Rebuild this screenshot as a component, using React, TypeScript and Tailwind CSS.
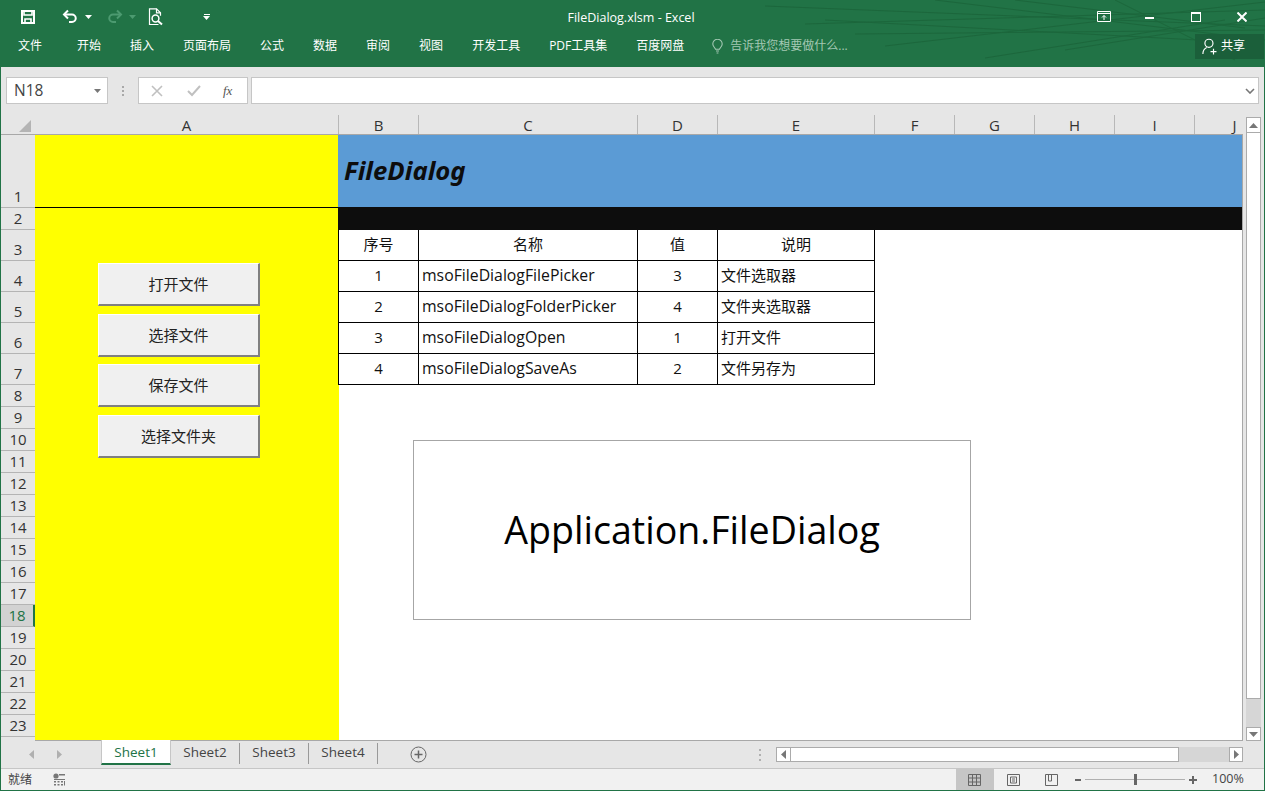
import React from "react";

const FONT = "font-['Open_Sans','Noto_Sans_CJK_SC',sans-serif]";

const tabs = ["开始", "插入", "页面布局", "公式", "数据", "审阅", "视图", "开发工具", "PDF工具集", "百度网盘"];

const columns = [
  { label: "A", w: "w-[304px]" },
  { label: "B", w: "w-[80px]" },
  { label: "C", w: "w-[219px]" },
  { label: "D", w: "w-[80px]" },
  { label: "E", w: "w-[157px]" },
  { label: "F", w: "w-[80px]" },
  { label: "G", w: "w-[80px]" },
  { label: "H", w: "w-[80px]" },
  { label: "I", w: "w-[80px]" },
  { label: "J", w: "w-[80px]" },
];

const rowHeights = [
  "h-[73px]", "h-[22px]", "h-[31px]", "h-[31px]", "h-[31px]", "h-[31px]", "h-[31px]",
  "h-[22px]", "h-[22px]", "h-[22px]", "h-[22px]", "h-[22px]", "h-[22px]", "h-[22px]", "h-[22px]",
  "h-[22px]", "h-[22px]", "h-[22px]", "h-[22px]", "h-[22px]", "h-[22px]", "h-[22px]", "h-[22px]", "h-[22px]",
];

const tableRows = [
  ["1", "msoFileDialogFilePicker", "3", "文件选取器"],
  ["2", "msoFileDialogFolderPicker", "4", "文件夹选取器"],
  ["3", "msoFileDialogOpen", "1", "打开文件"],
  ["4", "msoFileDialogSaveAs", "2", "文件另存为"],
];

function SaveIcon() {
  return (
    <svg width="16" height="16" viewBox="0 0 16 16" fill="none" stroke="#fff" strokeWidth="2">
      <path d="M2 2h12v12H2z" />
      <path d="M4 2v4h8V2" strokeWidth="1.6" />
      <path d="M5 14v-4h6v4" strokeWidth="1.6" />
    </svg>
  );
}

function UndoIcon({ color, flip }: { color: string; flip?: boolean }) {
  return (
    <svg width="16" height="15" viewBox="0 0 16 15" fill="none" stroke={color} strokeWidth="2" className={flip ? "-scale-x-100" : ""}>
      <path d="M6 1.500 2 5.500l4 4" />
      <path d="M2.500 5.500H10a3.600 3.600 0 0 1 0 7.500H7" />
    </svg>
  );
}

function Caret({ color }: { color: string }) {
  return (
    <svg width="7" height="4" viewBox="0 0 7 4" fill={color}>
      <path d="M0 0h7L3.500 4z" />
    </svg>
  );
}

function PreviewIcon() {
  return (
    <svg width="16" height="18" viewBox="0 0 16 18" fill="none" stroke="#fff" strokeWidth="1.2">
      <path d="M10.500 16.500H1.500V.8h7l4 4v3" />
      <path d="M8.500.8v4h4" />
      <circle cx="7.500" cy="10.500" r="3.400" strokeWidth="1.500" />
      <path d="m10 13 4 3.600" strokeWidth="2" />
    </svg>
  );
}

function TriButton({ dir, dim }: { dir: "up" | "down" | "left" | "right"; dim?: boolean }) {
  const c = dim ? "#b0b0b0" : "#777777";
  const d = { up: "M0 5h9L4.500 0z", down: "M0 0h9L4.500 5z", left: "M5 0v9L0 4.500z", right: "M0 0v9l5-4.500z" }[dir];
  const horizontal = dir === "up" || dir === "down";
  return (
    <svg width={horizontal ? 9 : 5} height={horizontal ? 5 : 9} viewBox={horizontal ? "0 0 9 5" : "0 0 5 9"} fill={c}>
      <path d={d} />
    </svg>
  );
}

function TitleBar() {
  return (
    <div className="relative h-[67px] shrink-0 overflow-hidden bg-[#217346] text-white">
      <svg className="absolute right-0 top-0" width="500" height="67" viewBox="0 0 500 67" fill="none" stroke="#1b6339" strokeWidth="1" opacity="0.75">
        <path d="M0 6 500 26" />
        <path d="M40 24 500 10" />
        <path d="M90 34 500 30" />
        <path d="M170 0 500 40" />
        <path d="M250 0 480 28" />
        <path d="M350 0 470 60" />
        <path d="M120 46 500 2" />
        <path d="M220 58 460 20" />
        <path d="M300 50 500 18" />
        <path d="M60 20 470 42" />
      </svg>
      <div className="absolute inset-x-0 top-[9px] pr-[3px] text-center text-[12.5px] leading-[17px]">FileDialog.xlsm - Excel</div>
      <div className="relative flex h-[33px] items-center">
        <div className="ml-[20px]"><SaveIcon /></div>
        <div className="ml-[26px]"><UndoIcon color="#ffffff" /></div>
        <div className="ml-[7px]"><Caret color="#ffffff" /></div>
        <div className="ml-[15px]"><UndoIcon color="#4c9a70" flip /></div>
        <div className="ml-[6px]"><Caret color="#4c9a70" /></div>
        <div className="ml-[12px]"><PreviewIcon /></div>
        <div className="ml-[39px] flex flex-col items-center gap-[1px]">
          <div className="h-[1px] w-[6px] bg-white" />
          <Caret color="#ffffff" />
        </div>
        <div className="ml-auto flex items-center">
          <div className="flex w-[46px] justify-center">
            <svg width="14" height="11" viewBox="0 0 14 11" fill="none" stroke="#fff" strokeWidth="1">
              <path d="M.5.5h13v10H.5z" />
              <path d="M.5 2.500h13" />
              <path d="M7 9V4.500M5 6.500l2-2 2 2" />
            </svg>
          </div>
          <div className="flex w-[46px] justify-center pr-[2px]">
            <div className="mt-[2px] h-[2px] w-[9px] bg-white" />
          </div>
          <div className="flex w-[46px] justify-center pr-[1px]">
            <div className="h-[10px] w-[10px] border border-t-2 border-white" />
          </div>
          <div className="flex w-[46px] justify-center">
            <svg width="10" height="10" viewBox="0 0 10 10" stroke="#fff" strokeWidth="2">
              <path d="m.5.5 9 9M9.500.5l-9 9" />
            </svg>
          </div>
        </div>
      </div>
      <div className="relative flex h-[26px] items-center pl-[18px] text-[12px]">
        <span className="mr-[35px]">文件</span>
        <div className="flex gap-[29px]">
          {tabs.map((t) => (
            <span key={t} className="whitespace-nowrap">{t}</span>
          ))}
        </div>
        <div className="ml-[28px] flex items-center gap-[7px] text-[#a3c8b3]">
          <svg width="11" height="15" viewBox="0 0 11 15" fill="none" stroke="#a3c8b3" strokeWidth="1.1">
            <path d="M3.500 10.200C3 8.600.8 7.600.8 5A4.700 4.700 0 0 1 10.200 5c0 2.600-2.200 3.600-2.700 5.200z" />
            <path d="M4 12h3M4.600 14h1.800" />
          </svg>
          <span className="whitespace-nowrap">告诉我您想要做什么...</span>
        </div>
        <div className="ml-auto mr-[1px] flex h-[25px] w-[69px] items-center gap-[3px] bg-[#1b5f3a] pl-[7px]">
          <svg width="16" height="17" viewBox="0 0 15 16" fill="none" stroke="#fff" strokeWidth="1.1">
            <circle cx="6.500" cy="5" r="3.800" />
            <path d="M.8 15c0-3 1.500-5 3.600-6M10.800 10v5.500M8 12.800h5.600" />
          </svg>
          <span>共享</span>
        </div>
      </div>
    </div>
  );
}

function FormulaBar() {
  return (
    <div className="flex h-[48px] shrink-0 items-start gap-[3px] pl-[5px] pt-[10px]">
      <div className="flex h-[27px] w-[102px] items-center justify-between border border-[#c6c6c6] bg-white pl-[7px] pr-[6px] text-[15.5px] text-[#444444]">
        <span>N18</span>
        <Caret color="#777777" />
      </div>
      <div className="flex h-[27px] w-[24px] flex-col items-center justify-center gap-[2px]">
        <div className="h-[2px] w-[2px] bg-[#a8a8a8]" />
        <div className="h-[2px] w-[2px] bg-[#a8a8a8]" />
        <div className="h-[2px] w-[2px] bg-[#a8a8a8]" />
      </div>
      <div className="flex h-[27px] w-[110px] items-center border border-[#c6c6c6] bg-white pl-[12px]">
        <svg width="12" height="12" viewBox="0 0 12 12" stroke="#c0c0c0" strokeWidth="1.6">
          <path d="m1 1 10 10M11 1 1 11" />
        </svg>
        <svg className="ml-[24px]" width="14" height="12" viewBox="0 0 14 12" fill="none" stroke="#c0c0c0" strokeWidth="2">
          <path d="m1 6 4 4 8-9" />
        </svg>
        <span className="ml-[22px] font-['Liberation_Serif',serif] text-[13px] italic text-[#555555]">fx</span>
      </div>
      <div className="flex h-[27px] w-[1008px] items-center justify-end border border-[#c6c6c6] bg-white pr-[3px]">
        <svg width="10" height="6" viewBox="0 0 10 6" fill="none" stroke="#777777" strokeWidth="1.6">
          <path d="m1 1 4 4 4-4" />
        </svg>
      </div>
    </div>
  );
}

function ColumnHeaders() {
  return (
    <div className="flex h-[20px] shrink-0">
      <div className="flex h-[20px] w-[34px] shrink-0 items-end justify-end border-b border-[#a8a8a8] pb-[2px] pr-[4px]">
        <div className="h-0 w-0 border-b-[12px] border-l-[12px] border-b-[#b4b4b4] border-l-transparent" />
      </div>
      <div className="flex h-[20px] w-[1208px] overflow-hidden border-b border-[#a8a8a8]">
        {columns.map((c) => (
          <div key={c.label} className={`${c.w} shrink-0 border-r border-[#b8b8b8] text-center text-[15px] leading-[20px] text-[#333333]`}>
            {c.label}
          </div>
        ))}
      </div>
    </div>
  );
}

function RowHeaders() {
  return (
    <div className="h-[605px] w-[34px] shrink-0 overflow-hidden">
      {rowHeights.map((h, i) => (
        <div
          key={i}
          className={`${h} flex items-end justify-center border-b border-[#b4b4b4] pb-[1px] text-[15px] leading-[20px] ${
            i === 17 ? "border-r-2 border-r-[#217346] bg-[#d2d2d2] text-[#217346]" : "text-[#333333]"
          }`}
        >
          {i < 23 ? i + 1 : null}
        </div>
      ))}
    </div>
  );
}

function MacroButton({ label, className }: { label: string; className: string }) {
  return (
    <div
      className={`${className} flex h-[43px] w-[162px] items-center justify-center border-b-2 border-l border-r-2 border-t border-b-[#808080] border-l-[#ffffff] border-r-[#808080] border-t-[#ffffff] bg-[#f0f0f0] text-[15px] text-[#222222]`}
    >
      {label}
    </div>
  );
}

function Sheet() {
  const cellBase = "flex h-[31px] items-center border-b border-r border-black";
  return (
    <div className="relative flex h-[605px] w-[1207px] overflow-hidden bg-white">
      <div className="w-[304px] shrink-0 bg-[#ffff00]">
        <div className="h-[73px] border-b border-black" />
        <div className="pl-[63px] pt-[55px]">
          <MacroButton label="打开文件" className="" />
          <MacroButton label="选择文件" className="mt-[8px]" />
          <MacroButton label="保存文件" className="mt-[7px]" />
          <MacroButton label="选择文件夹" className="mt-[8px]" />
        </div>
      </div>
      <div className="-ml-px flex-1">
        <div className="flex h-[72px] items-center bg-[#5b9bd5] pl-[6px] font-['Noto_Sans',sans-serif] text-[25.7px] font-bold italic text-[#0d0d0d]">
          FileDialog
        </div>
        <div className="h-[23px] bg-[#0d0d0d]" />
        <div className="grid w-[537px] grid-cols-[81px_219px_80px_157px] text-[15px] text-[#111111]">
          <div className={`${cellBase} justify-center border-l bg-white pb-[2px]`}>序号</div>
          <div className={`${cellBase} justify-center pb-[2px]`}>名称</div>
          <div className={`${cellBase} justify-center pb-[2px]`}>值</div>
          <div className={`${cellBase} justify-center pb-[2px]`}>说明</div>
          {tableRows.map((r) => (
            <React.Fragment key={r[0]}>
              <div className={`${cellBase} justify-center border-l bg-white pb-[1px]`}>{r[0]}</div>
              <div className={`${cellBase} pl-[3px] text-[15.8px]`}>{r[1]}</div>
              <div className={`${cellBase} justify-center pb-[1px]`}>{r[2]}</div>
              <div className={`${cellBase} pb-[2px] pl-[3px]`}>{r[3]}</div>
            </React.Fragment>
          ))}
        </div>
      </div>
      <div className="absolute left-[378px] top-[305px] flex h-[180px] w-[558px] items-center justify-center border border-[#a6a6a6] bg-white text-[37.6px] text-black">
        Application.FileDialog
      </div>
    </div>
  );
}

function VerticalScrollbar() {
  return (
    <div className="flex w-[15px] flex-col">
      <div className="flex h-[16px] items-center justify-center border border-[#ababab] bg-white"><TriButton dir="up" /></div>
      <div className="h-[566px] border-x border-b border-[#ababab] bg-white" />
      <div className="h-[28px] bg-[#d6d6d6]" />
      <div className="flex h-[14px] items-center justify-center border border-[#ababab] bg-white"><TriButton dir="down" /></div>
    </div>
  );
}

function TabBar() {
  const sheets = ["Sheet2", "Sheet3", "Sheet4"];
  return (
    <div className="flex h-[27px] shrink-0">
      <div className="flex w-[100px] items-center gap-[23px] pl-[28px]">
        <TriButton dir="left" dim />
        <TriButton dir="right" dim />
      </div>
      <div className="-mt-px flex h-[25px] w-[70px] items-center justify-center border-b-2 border-l border-r border-[#217346] border-x-[#c6c6c6] bg-white pt-[1px] text-[13.5px] text-[#217346]">
        Sheet1
      </div>
      {sheets.map((s) => (
        <div key={s} className="mt-[2px] flex h-[21px] w-[69px] items-center justify-center border-r border-[#999999] pb-[2px] text-[13.5px] text-[#444444]">
          {s}
        </div>
      ))}
      <div className="ml-[32px] mt-[5px] flex h-[17px] w-[17px] items-center justify-center">
        <svg width="17" height="17" viewBox="0 0 17 17" fill="none" stroke="#666666">
          <circle cx="8.500" cy="8.500" r="7.500" />
          <path d="M8.500 4.500v8M4.500 8.500h8" strokeWidth="1.500" />
        </svg>
      </div>
      <div className="ml-[332px] mt-[8px] flex h-[12px] w-[3px] flex-col justify-between">
        <div className="h-[2px] w-[2px] bg-[#b0b0b0]" />
        <div className="h-[2px] w-[2px] bg-[#b0b0b0]" />
        <div className="h-[2px] w-[2px] bg-[#b0b0b0]" />
      </div>
      <div className="ml-[14px] mt-[6px] flex h-[15px] w-[467px]">
        <div className="flex w-[15px] items-center justify-center border border-[#ababab] bg-white"><TriButton dir="left" /></div>
        <div className="w-[388px] border-y border-r border-[#ababab] bg-white" />
        <div className="w-[50px] bg-[#d6d6d6]" />
        <div className="flex w-[14px] items-center justify-center border border-[#ababab] bg-white"><TriButton dir="right" /></div>
      </div>
    </div>
  );
}

function StatusBar() {
  return (
    <div className="flex h-[22px] shrink-0 items-center border-t border-[#c6c6c6] bg-[#f1f1f1] text-[12px] text-[#444444]">
      <span className="ml-[7px]">就绪</span>
      <svg className="ml-[21px]" width="13" height="13" viewBox="0 0 13 13" fill="#777777">
        <circle cx="3" cy="3" r="2.600" />
        <path d="M6 1h6v1.500H6zM1 6h11v1H1zM1 8h2v1.500H1zM4.500 8h2v1.500h-2zM8 8h2v1.500H8zM1 11h2v1.500H1zM4.500 11h2v1.500h-2zM8 11h2v1.500H8zM11 8h1v4.500h-1z" />
      </svg>
      <div className="ml-[890px] flex h-[21px] w-[38px] items-center justify-center bg-[#c6c6c6] pr-[2px]">
        <svg width="13" height="12" viewBox="0 0 13 12" fill="none" stroke="#666666">
          <path d="M.5.500h12v11H.5zM4.500.500v11M8.500.500v11M.5 4h12M.5 8h12" />
        </svg>
      </div>
      <div className="flex w-[38px] justify-center">
        <svg width="13" height="12" viewBox="0 0 13 12" fill="none" stroke="#666666">
          <path d="M.5.500h12v11H.5zM3.500 3h6v6h-6zM5 5h3M5 7h3" />
        </svg>
      </div>
      <div className="flex w-[38px] justify-center">
        <svg width="13" height="12" viewBox="0 0 13 12" fill="none" stroke="#666666">
          <path d="M.5.500h12v11H.5zM6.500.500V7H3.500V.500" />
        </svg>
      </div>
      <div className="ml-[5px] h-[2px] w-[6px] bg-[#666666]" />
      <div className="relative ml-[4px] h-[1px] w-[100px] bg-[#b0b0b0]">
        <div className="absolute -top-[5px] left-[49px] h-[11px] w-[3px] bg-[#666666]" />
      </div>
      <svg className="ml-[4px]" width="8" height="8" viewBox="0 0 8 8" stroke="#666666" strokeWidth="2">
        <path d="M4 0v8M0 4h8" />
      </svg>
      <span className="ml-[15px] text-[12.5px]">100%</span>
    </div>
  );
}

export default function App() {
  return (
    <div className={`flex h-[791px] w-[1265px] flex-col overflow-hidden bg-[#e6e6e6] ${FONT}`}>
      <TitleBar />
      <div className="flex min-h-0 flex-1 flex-col border-x border-b border-[#217346]">
        <FormulaBar />
        <ColumnHeaders />
        <div className="flex h-[606px] shrink-0">
          <RowHeaders />
          <div className="h-[606px] w-[1208px] shrink-0 border-b border-r border-[#a8a8a8]">
            <Sheet />
          </div>
          <div className="ml-[3px] -mt-[18px]">
            <VerticalScrollbar />
          </div>
        </div>
        <TabBar />
        <StatusBar />
      </div>
    </div>
  );
}
